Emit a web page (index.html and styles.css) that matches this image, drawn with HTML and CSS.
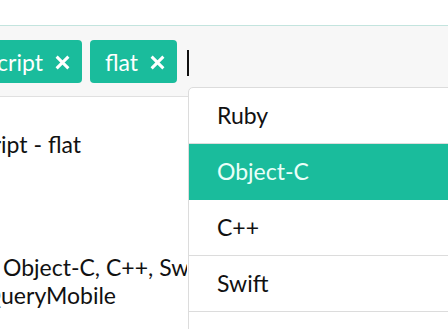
FILE: index.html
```html
<!DOCTYPE html>
<html lang="en">
<head>
  <meta charset="UTF-8">
  <title>Tags input</title>
  <link rel="stylesheet" href="styles.css">
</head>
<body>

  <div class="top"></div>

  <div class="field">
    <div class="tags">
      <span class="tag">JavaScript
        <svg class="remove" viewBox="0 0 14 14"><path d="M1.5 1.5 L12.5 12.5 M12.5 1.5 L1.5 12.5"/></svg>
      </span>
      <span class="tag">flat
        <svg class="remove" viewBox="0 0 14 14"><path d="M1.5 1.5 L12.5 12.5 M12.5 1.5 L1.5 12.5"/></svg>
      </span>
    </div>
    <span class="caret"></span>
  </div>

  <div class="result">
    <p class="line line-title"><span>JavaScript - flat</span></p>
    <p class="line line-list">Object-C, C++, Swift, jQuery,</p>
    <p class="line line-end"><span>jQueryMobile</span></p>
  </div>

  <ul class="menu">
    <li>Ruby</li>
    <li class="active">Object-C</li>
    <li>C++</li>
    <li>Swift</li>
    <li>PHP</li>
  </ul>

</body>
</html>
```

FILE: styles.css
```css
* { box-sizing: border-box; }
html, body {
  margin: 0; padding: 0; height: 100%; width: 100%;
  font-family: Lato, "Open Sans", sans-serif;
  font-size: 23px; background: white; color: #111;
  overflow: hidden; position: relative;
}
.top { height: 25px; }
.field {
  display: flex; align-items: center;
  padding: 14px 0 13px;
  background: #f7f7f7;
  border-top: 1px solid #c3e4de; border-bottom: 1px solid #e0e0e0;
}
.tags {
  display: flex; justify-content: flex-end; gap: 8px;
  width: 177px; flex-shrink: 0;
}
.tag {
  display: flex; align-items: center; gap: 12px; flex-shrink: 0;
  height: 43px; padding: 0 12px 0 15px;
  background: #1abc9c; color: white; border-radius: 4px;
  white-space: nowrap;
}
.remove { width: 15px; height: 15px; margin-top: 1px; }
.remove path { stroke: white; stroke-width: 2.8; fill: none; }
.caret {
  width: 2px; height: 26px; margin-left: 10px; margin-top: 3px;
  background: #111;
}
.result { padding-top: 33px; }
.line { margin: 0; line-height: 28px; white-space: nowrap; }
.line-title, .line-end { display: flex; justify-content: flex-end; }
.line-title { width: 81px; }
.line-list { margin-top: 95px; padding-left: 3px; width: 187px; overflow: hidden; }
.line-end { width: 116px; }
.menu {
  position: absolute; left: 188px; top: 87px; width: 300px;
  margin: 0; padding: 0; list-style: none;
  background: white; border: 1px solid #dcdcdc; border-radius: 5px 0 0 0;
}
.menu li {
  height: 56px; line-height: 55px; padding-left: 28px;
  border-bottom: 1px solid #dcdcdc; color: #111;
}
.menu li.active { background: #1abc9c; color: #eafff9; border-bottom-color: #1abc9c; }
```
